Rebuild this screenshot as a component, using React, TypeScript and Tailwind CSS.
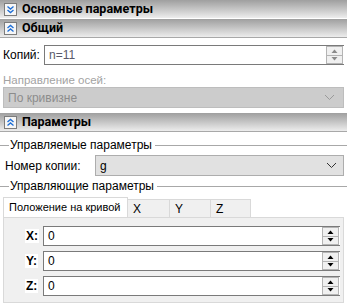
import React from "react"

const font = { fontFamily: '"Liberation Sans", Arial, sans-serif' }

function Chevrons({ down }: { down?: boolean }) {
  return (
    <svg width="13" height="13" viewBox="0 0 13 13" className="shrink-0">
      <rect x="0.5" y="0.5" width="12" height="12" fill="#f6f6f6" stroke="#7c7c7c" />
      {down ? (
        <g fill="none" stroke="#1f6fd6" strokeWidth="1.4">
          <path d="M3.5 3.5 L6.5 6 L9.5 3.5" />
          <path d="M3.5 7 L6.5 9.5 L9.5 7" />
        </g>
      ) : (
        <g fill="none" stroke="#1f6fd6" strokeWidth="1.4">
          <path d="M3.5 6 L6.5 3.5 L9.5 6" />
          <path d="M3.5 9.5 L6.5 7 L9.5 9.5" />
        </g>
      )}
    </svg>
  )
}

function Header({ title, down, last }: { title: string; down?: boolean; last?: boolean }) {
  return (
    <div
      className={`h-[19px] flex items-center gap-[5px] pl-[4px] bg-gradient-to-b from-[#9f9f9f] to-[#ededed] border-b ${
        last ? "border-[#a8a8a8]" : "border-white"
      }`}
    >
      <Chevrons down={down} />
      <span
        className="text-[12.5px] font-bold text-black leading-none"
        style={{ fontFamily: 'Roboto, "Liberation Sans", sans-serif' }}
      >
        {title}
      </span>
    </div>
  )
}

function Spinner({ disabled }: { disabled?: boolean }) {
  const c = disabled ? "#8a8a8a" : "#000"
  return (
    <div className="absolute right-[1px] top-0 bottom-0 w-[17px] flex flex-col border border-[#b4b4b4] bg-[#e9e9e9]">
      <div className="flex-1 flex items-center justify-center border-b border-[#b4b4b4] bg-[#f0f0f0]">
        <svg width="7" height="4" viewBox="0 0 7 4">
          <path d="M0.5 4 L3.5 0.5 L6.5 4 Z" fill={c} />
        </svg>
      </div>
      <div className="flex-1 flex items-center justify-center bg-[#f0f0f0]">
        <svg width="7" height="4" viewBox="0 0 7 4">
          <path d="M0.5 0 L3.5 3.5 L6.5 0 Z" fill={c} />
        </svg>
      </div>
    </div>
  )
}

function NumInput({ value, className, color }: { value: string; className?: string; color?: string }) {
  return (
    <div
      className={`relative h-[20px] bg-white border border-[#7a7a7a] border-r-0 flex items-center pl-[4px] text-[12px] ${className ?? ""}`}
      style={{ color: color ?? "#000" }}
    >
      {value}
      <Spinner disabled={!!color} />
    </div>
  )
}

function Chevron({ color }: { color: string }) {
  return (
    <svg width="11" height="7" viewBox="0 0 11 7">
      <path d="M1 1 L5.5 5.5 L10 1" fill="none" stroke={color} strokeWidth="1" />
    </svg>
  )
}

function GroupLine({ title }: { title: string }) {
  return (
    <div className="h-[14px] flex items-center">
      <div className="w-[9px] h-px bg-[#a8a8a8]" />
      <span className="px-[1px] text-[12px] text-black leading-none whitespace-nowrap">{title}</span>
      <div className="flex-1 h-px bg-[#a8a8a8] ml-[2px]" />
    </div>
  )
}

export default function App() {
  return (
    <div className="w-[347px] h-[306px] bg-white overflow-hidden text-black" style={font}>
      <Header title="Основные параметры" down />
      <Header title="Общий" last />

      <div className="px-[3px]">
        <div className="flex items-center mt-[7px]">
          <span className="w-[41px] text-[12px]">Копий:</span>
          <NumInput value="n=11" className="flex-1" color="#5a5a6a" />
        </div>
        <div className="mt-[9px] text-[11.5px] text-[#a3a3a3] leading-[13px]">Направление осей:</div>
        <div className="h-[21px] bg-[#cccccc] border border-[#bdbdbd] flex items-center justify-between pl-[4px] pr-[8px] text-[12px] text-[#8c8c8c]">
          <span>По кривизне</span>
          <Chevron color="#9a9a9a" />
        </div>
      </div>

      <div className="mt-[5px]">
        <Header title="Параметры" last />
      </div>

      <div className="mt-[6px]">
        <GroupLine title="Управляемые параметры" />
      </div>
      <div className="flex items-center mt-[3px] pl-[5px] pr-[3px]">
        <span className="w-[90px] text-[12px]">Номер копии:</span>
        <div className="flex-1 h-[21px] bg-[#e1e1e1] border border-[#adadad] flex items-center justify-between pl-[4px] pr-[6px] text-[12px]">
          <span>g</span>
          <Chevron color="#333" />
        </div>
      </div>
      <div className="mt-[3px]">
        <GroupLine title="Управляющие параметры" />
      </div>

      <div className="px-[3px] mt-[4px]">
        <div className="flex items-end h-[20px] text-[12px] whitespace-nowrap">
          <div className="h-[20px] w-[125px] bg-white border border-b-0 border-[#d9d9d9] flex items-center pl-[5px] text-[11px]">
            Положение на кривой
          </div>
          <div className="h-[18px] w-[42px] bg-[#f0f0f0] border border-l-0 border-b-0 border-[#d9d9d9] flex items-center pl-[5px]">
            X
          </div>
          <div className="h-[18px] w-[41px] bg-[#f0f0f0] border border-l-0 border-b-0 border-[#d9d9d9] flex items-center pl-[5px]">
            Y
          </div>
          <div className="h-[18px] w-[40px] bg-[#f0f0f0] border border-l-0 border-b-0 border-[#d9d9d9] flex items-center pl-[5px]">
            Z
          </div>
        </div>
        <div className="h-[86px] bg-[#f0f0f0] border border-[#d9d9d9] pt-[8px] pl-[21px] pr-[3px] flex flex-col gap-[5px]">
          {["X:", "Y:", "Z:"].map((l) => (
            <div key={l} className="flex items-center">
              <span className="w-[18px] text-[12px] font-semibold">
                <span className="bg-white px-[1px]">{l}</span>
              </span>
              <NumInput value="0" className="flex-1" />
            </div>
          ))}
        </div>
      </div>
    </div>
  )
}
